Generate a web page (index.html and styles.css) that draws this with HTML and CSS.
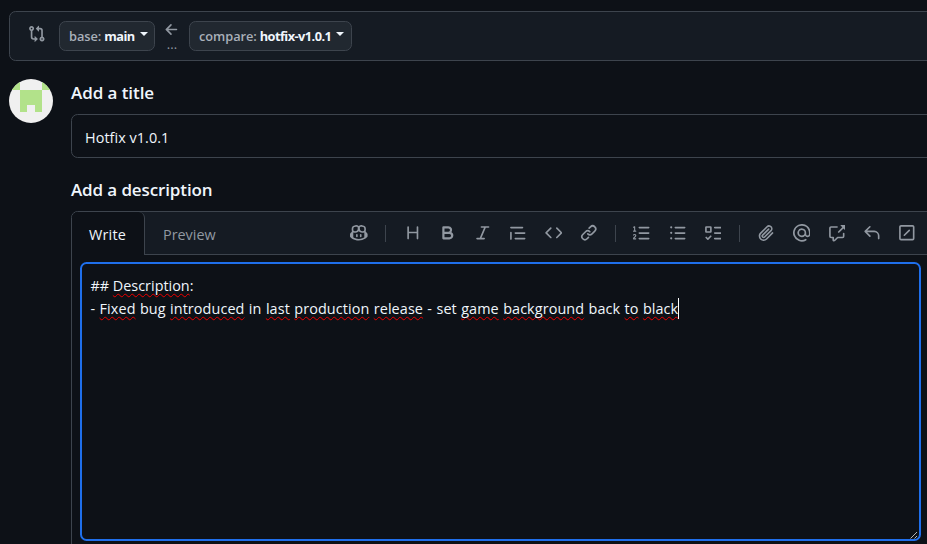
FILE: index.html
```html
<!DOCTYPE html>
<html lang="en">
<head>
<meta charset="utf-8">
<title>Open a pull request</title>
<link rel="stylesheet" href="styles.css">
</head>
<body>
<header class="range">
  <svg class="icon range-icon" viewBox="0 0 16 16"><path d="M9.573.677A.25.25 0 0 1 10 .854V2.5h1A2.5 2.5 0 0 1 13.5 5v5.628a2.251 2.251 0 1 1-1.5 0V5a1 1 0 0 0-1-1h-1v1.646a.25.25 0 0 1-.427.177L7.177 3.427a.25.25 0 0 1 0-.354L9.573.677ZM6 12v-1.646a.25.25 0 0 1 .427-.177l2.396 2.396a.25.25 0 0 1 0 .354l-2.396 2.396A.25.25 0 0 1 6 15.146V13.5H5A2.5 2.5 0 0 1 2.5 11V5.372a2.25 2.25 0 1 1 1.5 0V11a1 1 0 0 0 1 1h1ZM4 3.25a.75.75 0 1 0-1.5 0 .75.75 0 0 0 1.5 0Zm8.75 8.75a.75.75 0 1 0 0 1.5.75.75 0 0 0 0-1.5Z"/></svg>
  <button class="branch base"><span class="muted">base:</span> <span class="name">main</span><i class="caret"></i></button>
  <div class="direction">
    <svg class="icon" viewBox="0 0 16 16"><path d="M7.78 12.53a.75.75 0 0 1-1.06 0L2.47 8.28a.75.75 0 0 1 0-1.06l4.25-4.25a.751.751 0 0 1 1.042.018.751.751 0 0 1 .018 1.042L4.81 7h7.44a.75.75 0 0 1 0 1.5H4.81l2.97 2.97a.75.75 0 0 1 0 1.06Z"/></svg>
    <span class="dots">...</span>
  </div>
  <button class="branch compare"><span class="muted">compare:</span> <span class="name">hotfix-v1.0.1</span><i class="caret"></i></button>
</header>
<main class="content">
  <svg class="avatar" viewBox="0 0 44 44"><rect width="44" height="44" fill="#f0f0f0"/><path fill="#b2e28a" d="M0 0h11v11H0zM33 0h11v11H33zM11 11h22v22h-7v-7h-8v7h-7z"/></svg>
  <form class="form">
    <h2>Add a title</h2>
    <div class="title-input"><span>Hotfix v1.0.1</span></div>
    <h2 class="h-desc">Add a description</h2>
    <section class="editor">
      <div class="tabs">
        <div class="tab active"><span>Write</span></div>
        <div class="bar">
          <span class="preview">Preview</span>
          <div class="tools">
            <span class="tool"><svg class="icon" viewBox="0 0 16 16"><path d="M7.998 15.035c-4.562 0-7.873-2.914-7.998-3.749V9.338c.085-.628.677-1.686 1.588-2.065.013-.07.024-.143.036-.218.029-.183.06-.384.126-.612-.201-.508-.254-1.084-.254-1.656 0-.87.128-1.769.693-2.484.579-.733 1.494-1.124 2.724-1.261 1.206-.134 2.262.034 2.944.765.05.053.096.108.139.165.044-.057.094-.112.143-.165.682-.731 1.738-.899 2.944-.765 1.23.137 2.145.528 2.724 1.261.566.715.693 1.614.693 2.484 0 .572-.053 1.148-.254 1.656.066.228.098.429.126.612.012.076.024.148.037.218.924.385 1.522 1.471 1.591 2.095v1.872c0 .766-3.351 3.795-8.002 3.795Zm0-1.485c2.28 0 4.584-1.11 5.002-1.433V7.862l-.023-.116c-.49.21-1.075.291-1.727.291-1.146 0-2.059-.327-2.71-.991A3.222 3.222 0 0 1 8 6.303a3.24 3.24 0 0 1-.544.743c-.65.664-1.563.991-2.71.991-.652 0-1.236-.081-1.727-.291l-.023.116v4.255c.419.323 2.722 1.433 5.002 1.433ZM6.762 2.83c-.193-.206-.637-.413-1.682-.297-1.019.113-1.479.404-1.713.7-.247.312-.369.789-.369 1.554 0 .793.129 1.171.308 1.371.162.181.519.379 1.442.379.853 0 1.339-.235 1.638-.54.315-.322.527-.827.617-1.553.117-.935-.037-1.395-.241-1.614Zm4.155-.297c-1.044-.116-1.488.091-1.681.297-.204.219-.359.679-.242 1.614.091.726.303 1.231.618 1.553.299.305.784.54 1.638.54.922 0 1.28-.198 1.442-.379.179-.2.308-.578.308-1.371 0-.765-.123-1.242-.37-1.554-.233-.296-.693-.587-1.713-.7ZM6.25 9.037a.75.75 0 0 1 .75.75v1.501a.75.75 0 0 1-1.5 0V9.787a.75.75 0 0 1 .75-.75Zm4.25.75v1.501a.75.75 0 0 1-1.5 0V9.787a.75.75 0 0 1 1.5 0Z"/></svg></span>
            <i class="sep"></i>
            <span class="tool"><svg class="icon" viewBox="0 0 16 16"><path d="M3.75 2a.75.75 0 0 1 .75.75V7h7V2.75a.75.75 0 0 1 1.5 0v10.5a.75.75 0 0 1-1.5 0V8.5h-7v4.75a.75.75 0 0 1-1.5 0V2.75A.75.75 0 0 1 3.75 2Z"/></svg></span>
            <span class="tool"><svg class="icon" viewBox="0 0 16 16"><path d="M4 2h4.5a3.501 3.501 0 0 1 2.852 5.53A3.499 3.499 0 0 1 9.5 14H4a1 1 0 0 1-1-1V3a1 1 0 0 1 1-1Zm1 7v3h4.5a1.5 1.5 0 0 0 0-3Zm3.5-2a1.5 1.5 0 0 0 0-3H5v3Z"/></svg></span>
            <span class="tool"><svg class="icon" viewBox="0 0 16 16"><path d="M6 2.75A.75.75 0 0 1 6.75 2h6.5a.75.75 0 0 1 0 1.5h-2.505l-3.858 9H9.25a.75.75 0 0 1 0 1.5h-6.5a.75.75 0 0 1 0-1.5h2.505l3.858-9H6.75A.75.75 0 0 1 6 2.75Z"/></svg></span>
            <span class="tool"><svg class="icon" viewBox="0 0 16 16"><path d="M1.75 2.5h10.5a.75.75 0 0 1 0 1.5H1.75a.75.75 0 0 1 0-1.5Zm4 5h8.5a.75.75 0 0 1 0 1.5h-8.5a.75.75 0 0 1 0-1.5Zm0 5h8.5a.75.75 0 0 1 0 1.5h-8.5a.75.75 0 0 1 0-1.5ZM2.5 7.75v6a.75.75 0 0 1-1.5 0v-6a.75.75 0 0 1 1.5 0Z"/></svg></span>
            <span class="tool"><svg class="icon" viewBox="0 0 16 16"><path d="m11.28 3.22 4.25 4.25a.75.75 0 0 1 0 1.06l-4.25 4.25a.749.749 0 0 1-1.275-.326.749.749 0 0 1 .215-.734L13.94 8l-3.72-3.72a.749.749 0 0 1 .326-1.275.749.749 0 0 1 .734.215Zm-6.56 0a.751.751 0 0 1 1.042.018.751.751 0 0 1 .018 1.042L2.06 8l3.72 3.72a.749.749 0 0 1-.326 1.275.749.749 0 0 1-.734-.215L.47 8.53a.75.75 0 0 1 0-1.06Z"/></svg></span>
            <span class="tool"><svg class="icon" viewBox="0 0 16 16"><path d="m7.775 3.275 1.25-1.25a3.5 3.5 0 1 1 4.95 4.95l-2.5 2.5a3.5 3.5 0 0 1-4.95 0 .751.751 0 0 1 .018-1.042.751.751 0 0 1 1.042-.018 1.998 1.998 0 0 0 2.83 0l2.5-2.5a2.002 2.002 0 0 0-2.83-2.83l-1.25 1.25a.751.751 0 0 1-1.042-.018.751.751 0 0 1-.018-1.042Zm-4.69 9.64a1.998 1.998 0 0 0 2.83 0l1.25-1.25a.751.751 0 0 1 1.042.018.751.751 0 0 1 .018 1.042l-1.25 1.25a3.5 3.5 0 1 1-4.95-4.95l2.5-2.5a3.5 3.5 0 0 1 4.95 0 .751.751 0 0 1-.018 1.042.751.751 0 0 1-1.042.018 1.998 1.998 0 0 0-2.83 0l-2.5 2.5a1.998 1.998 0 0 0 0 2.83Z"/></svg></span>
            <i class="sep"></i>
            <span class="tool"><svg class="icon" viewBox="0 0 16 16"><path d="M5 3.25a.75.75 0 0 1 .75-.75h8.5a.75.75 0 0 1 0 1.5h-8.5A.75.75 0 0 1 5 3.25Zm0 5a.75.75 0 0 1 .75-.75h8.5a.75.75 0 0 1 0 1.5h-8.5A.75.75 0 0 1 5 8.25Zm0 5a.75.75 0 0 1 .75-.75h8.5a.75.75 0 0 1 0 1.5h-8.5a.75.75 0 0 1-.75-.75ZM.924 10.32a.5.5 0 0 1-.851-.525l.001-.001.001-.002.002-.004.007-.011c.097-.144.215-.273.348-.384.228-.19.588-.392 1.068-.392.468 0 .858.181 1.126.484.259.294.377.673.377 1.038 0 .987-.686 1.495-1.156 1.845l-.047.035c-.303.225-.522.4-.654.597h1.357a.5.5 0 0 1 0 1H.5a.5.5 0 0 1-.5-.5c0-1.005.692-1.52 1.167-1.875l.035-.025c.531-.396.8-.625.8-1.078a.57.57 0 0 0-.128-.376C1.806 10.068 1.695 10 1.5 10a.658.658 0 0 0-.429.163.835.835 0 0 0-.144.153ZM2.003 2.5V6h.503a.5.5 0 0 1 0 1H.5a.5.5 0 0 1 0-1h.503V3.308l-.28.14a.5.5 0 0 1-.446-.895l1.003-.5a.5.5 0 0 1 .723.447Z"/></svg></span>
            <span class="tool"><svg class="icon" viewBox="0 0 16 16"><path d="M5.75 2.5h8.5a.75.75 0 0 1 0 1.5h-8.5a.75.75 0 0 1 0-1.5Zm0 5h8.5a.75.75 0 0 1 0 1.5h-8.5a.75.75 0 0 1 0-1.5Zm0 5h8.5a.75.75 0 0 1 0 1.5h-8.5a.75.75 0 0 1 0-1.5ZM2 14a1 1 0 1 1 0-2 1 1 0 0 1 0 2Zm1-6a1 1 0 1 1-2 0 1 1 0 0 1 2 0ZM2 4a1 1 0 1 1 0-2 1 1 0 0 1 0 2Z"/></svg></span>
            <span class="tool"><svg class="icon" viewBox="0 0 16 16"><path d="M2 2h4a1 1 0 0 1 1 1v4a1 1 0 0 1-1 1H2a1 1 0 0 1-1-1V3a1 1 0 0 1 1-1Zm4.655 8.595a.75.75 0 0 1 0 1.06L4.03 14.28a.75.75 0 0 1-1.06 0l-1.5-1.5a.749.749 0 0 1 .326-1.275.749.749 0 0 1 .734.215l.97.97 2.095-2.095a.75.75 0 0 1 1.06 0ZM9.750 2.5h5.5a.75.75 0 0 1 0 1.5h-5.5a.75.75 0 0 1 0-1.5Zm0 5h5.5a.75.75 0 0 1 0 1.5h-5.5a.75.75 0 0 1 0-1.5Zm0 5h5.5a.75.75 0 0 1 0 1.5h-5.5a.75.75 0 0 1 0-1.5Zm-7.25-9v3h3v-3Z"/></svg></span>
            <i class="sep"></i>
            <span class="tool"><svg class="icon" viewBox="0 0 16 16"><path d="M12.212 3.02a1.753 1.753 0 0 0-2.478.003l-5.83 5.83a3.007 3.007 0 0 0-.88 2.127c0 .795.315 1.551.88 2.116.567.567 1.333.89 2.126.89.79 0 1.548-.321 2.116-.89l5.48-5.48a.75.75 0 0 1 1.061 1.06l-5.48 5.48a4.492 4.492 0 0 1-3.177 1.33c-1.2 0-2.345-.487-3.187-1.33a4.483 4.483 0 0 1-1.32-3.177c0-1.195.475-2.341 1.32-3.186l5.83-5.83a3.25 3.25 0 0 1 5.553 2.297c0 .863-.343 1.691-.953 2.301L7.439 12.39c-.375.377-.884.59-1.416.593a1.998 1.998 0 0 1-1.412-.593 1.992 1.992 0 0 1 0-2.828l5.48-5.48a.751.751 0 0 1 1.042.018.751.751 0 0 1 .018 1.042l-5.48 5.48a.492.492 0 0 0 0 .707.499.499 0 0 0 .352.154.51.51 0 0 0 .356-.154l5.833-5.827a1.755 1.755 0 0 0 0-2.481Z"/></svg></span>
            <span class="tool"><svg class="icon" viewBox="0 0 16 16"><path d="M4.75 2.37a6.501 6.501 0 0 0 6.5 11.26.75.75 0 0 1 .75 1.298A8 8 0 1 1 16 7.994v1.256a2.75 2.75 0 0 1-5.072 1.475 3.999 3.999 0 0 1-6.65-4.19A4 4 0 0 1 12 8v1.25a1.25 1.25 0 0 0 2.5 0V7.867a6.5 6.5 0 0 0-9.75-5.496ZM10.5 8a2.5 2.5 0 1 0-5 0 2.5 2.5 0 0 0 5 0Z"/></svg></span>
            <span class="tool"><svg class="icon" viewBox="0 0 16 16"><path d="M2.75 3.5a.25.25 0 0 0-.25.25v7.5c0 .138.112.25.25.25h2a.75.75 0 0 1 .75.75v2.19l2.72-2.72a.749.749 0 0 1 .53-.22h4.5a.25.25 0 0 0 .25-.25v-2.5a.75.75 0 0 1 1.5 0v2.5A1.75 1.75 0 0 1 13.25 13H9.06l-2.573 2.573A1.458 1.458 0 0 1 4 14.543V13H2.75A1.75 1.75 0 0 1 1 11.25v-7.5C1 2.784 1.784 2 2.75 2h5.5a.75.75 0 0 1 0 1.5ZM16 1.25v4.146a.25.25 0 0 1-.427.177L14.03 4.03l-3.75 3.75a.749.749 0 0 1-1.275-.326.749.749 0 0 1 .215-.734l3.75-3.75-1.543-1.543A.25.25 0 0 1 11.604 1h4.146a.25.25 0 0 1 .25.25Z"/></svg></span>
            <span class="tool"><svg class="icon" viewBox="0 0 16 16"><path d="M6.78 1.97a.75.75 0 0 1 0 1.06L3.81 6h6.44A4.75 4.75 0 0 1 15 10.75v2.5a.75.75 0 0 1-1.5 0v-2.5a3.25 3.25 0 0 0-3.25-3.25H3.81l2.97 2.97a.749.749 0 0 1-.326 1.275.749.749 0 0 1-.734-.215L1.47 7.28a.75.75 0 0 1 0-1.06l4.25-4.25a.75.75 0 0 1 1.06 0Z"/></svg></span>
            <span class="tool"><svg class="icon" viewBox="0 0 16 16"><path d="M2.75 1h10.5c.966 0 1.75.784 1.75 1.75v10.5A1.75 1.75 0 0 1 13.25 15H2.75A1.75 1.75 0 0 1 1 13.250V2.75C1 1.784 1.784 1 2.75 1Zm-.25 1.75v10.5c0 .138.112.25.25.25h10.5a.25.25 0 0 0 .25-.25V2.750a.25.25 0 0 0-.25-.25H2.75a.25.25 0 0 0-.25.25Zm8.28 3.53-4.5 4.5a.75.75 0 0 1-1.06-1.06l4.5-4.5a.75.75 0 0 1 1.06 1.06Z"/></svg></span>
          </div>
        </div>
      </div>
      <div class="textarea">
        <p>## <u>Description</u>:</p>
        <p class="body-line">- <u>Fixed</u> bug <u>introduced</u> in <u>last</u> <u>production</u> <u>release</u> - set <u>game</u> <u>background</u> back <u>to</u> <u>black</u><i class="cursor"></i></p>
        <svg class="grip" viewBox="0 0 8 8"><path d="M.5 7.500 7 1M4.500 7.500 7 5"/></svg>
      </div>
    </section>
  </form>
</main>
</body>
</html>
```
FILE: styles.css
```css
* { box-sizing: border-box; }
body {
  margin: 0;
  height: 544px;
  overflow: hidden;
  background: #0d1117;
  color: #f0f6fc;
  font-family: "Open Sans", "Noto Sans", sans-serif;
  font-size: 14.4px;
}
h2, p { margin: 0; }
span { white-space: nowrap; }
.icon { display: block; width: 17.6px; height: 17.6px; fill: #9198a1; flex: none; }
.range {
  display: flex;
  align-items: center;
  width: 940px;
  height: 50px;
  margin: 11px 0 0 9px;
  padding-left: 18px;
  background: #151b23;
  border: 1px solid #3d444d;
  border-radius: 6.6px;
}
.range-icon { margin: -4px 13.400px 0 0; }
.branch {
  display: flex;
  align-items: center;
  height: 30px;
  padding: 0 0 0 9px;
  background: #212830;
  border: 1px solid #3d444d;
  border-radius: 6.6px;
  color: #f0f6fc;
  font: 700 12.800px "Open Sans", "Noto Sans", sans-serif;
}
.muted { color: #a9b0b9; margin-right: 3px; font-weight: 600; letter-spacing: -.05px; }
.name { letter-spacing: -.56px; }
.base { width: 96px; }
.compare { width: 163px; }
.caret { margin: -5px 0 0 5px; border: 4.400px solid transparent; border-top-color: #f0f6fc; border-bottom: 0; }
.direction { display: flex; flex-direction: column; align-items: center; width: 34px; height: 30px; }
.dots { color: #9198a1; font-size: 13px; line-height: 10px; }
.content { display: flex; padding: 18px 0 0 9px; }
.avatar { width: 44px; height: 44px; border-radius: 50%; flex: none; }
.form { width: 870px; margin-left: 18px; flex: none; }
h2 { padding-top: 1px; font-size: 17px; line-height: 26px; font-weight: 600; letter-spacing: -.07px; }
.h-desc { letter-spacing: -.12px; }
.title-input {
  display: flex;
  align-items: center;
  height: 44px;
  margin: 8px 0 18px;
  padding: 2px 13px 0;
  border: 1px solid #3d444d;
  border-radius: 6.6px;
  letter-spacing: .06px;
}
.editor { height: 360px; margin-top: 8px; border: 1px solid #3d444d; border-radius: 6.6px; }
.tabs { display: flex; height: 43px; background: #151b23; border-radius: 6px 6px 0 0; }
.tab {
  display: flex;
  align-items: center;
  width: 73px;
  padding: 1px 0 0 17px;
  background: #0d1117;
  border-right: 1px solid #3d444d;
  border-radius: 6px 6px 0 0;
  letter-spacing: .2px;
}
.bar { display: flex; align-items: center; flex: 1; border-bottom: 1px solid #3d444d; }
.preview { width: 178.300px; margin: 2px 0 0 18px; color: #9198a1; }
.tools { display: flex; align-items: center; }
.tool { display: flex; justify-content: center; width: 35.200px; }
.sep { width: 1px; height: 17px; margin: 0 8.750px; background: #3d444d; }
.textarea {
  position: relative;
  width: 841px;
  height: 279px;
  margin: 7px 0 0 8px;
  padding: 10px 8.500px;
  border: 2px solid #1f6feb;
  border-radius: 6.6px;
  line-height: 23.100px;
  white-space: nowrap;
}
.body-line { letter-spacing: .1px; word-spacing: .5px; }
u { text-decoration: underline wavy #f00000 1.2px; text-underline-offset: 2px; text-decoration-skip-ink: none; }
.cursor { display: inline-block; width: 1px; height: 21px; background: #fff; vertical-align: -5px; margin-right: -1px; }
.grip { position: absolute; right: 1px; bottom: 0; width: 8px; height: 8px; fill: none; stroke: #b5b5b5; stroke-width: 1; }
```
